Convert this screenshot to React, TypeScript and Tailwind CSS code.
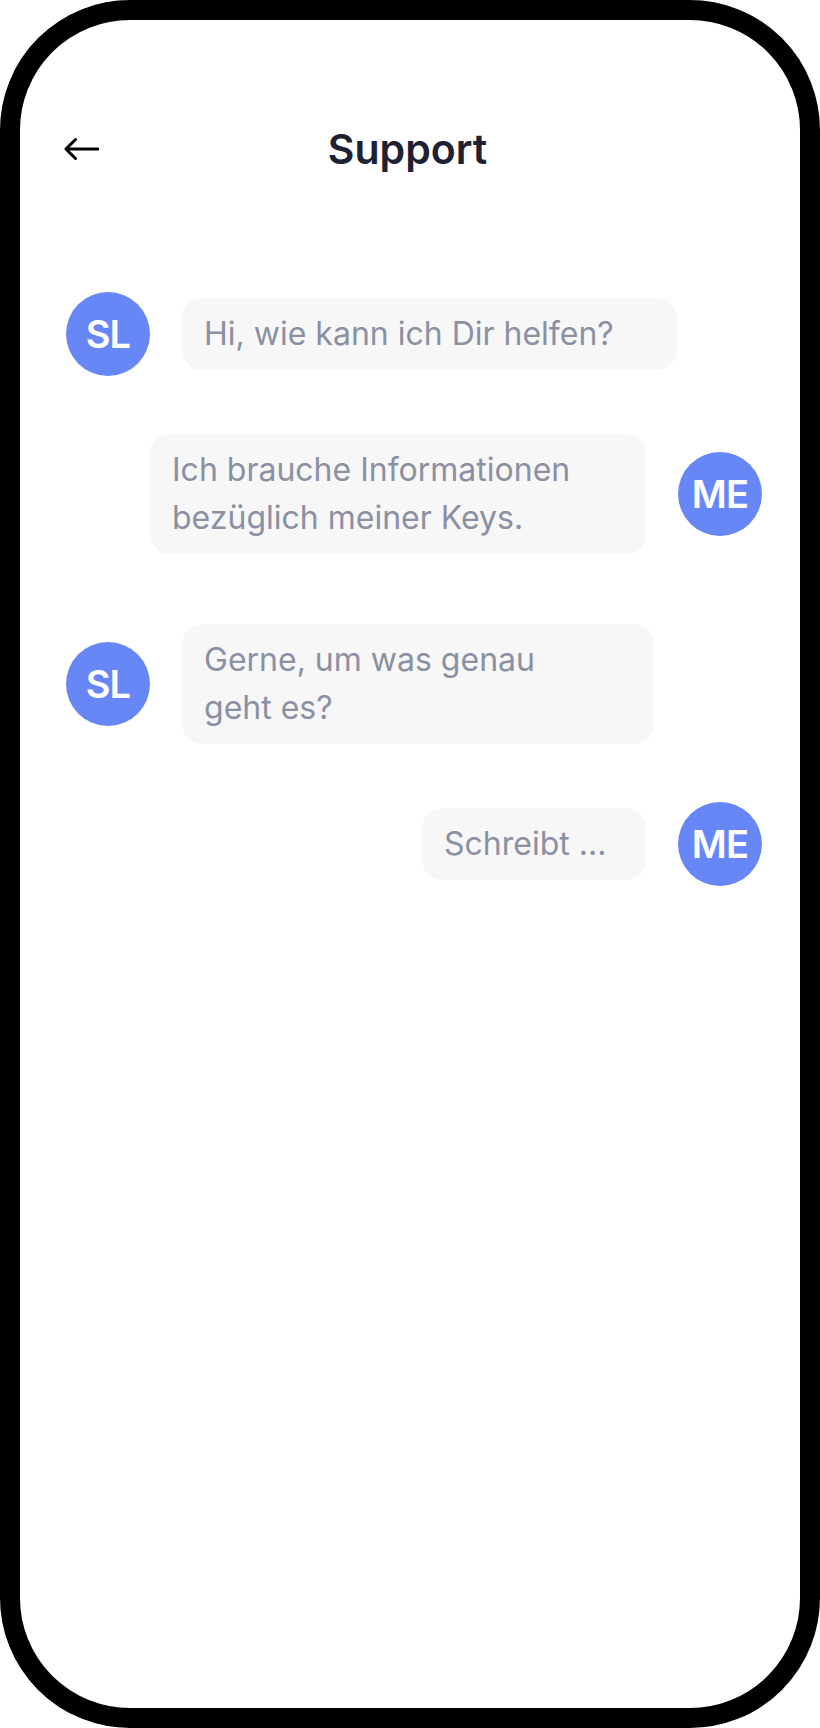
import React from 'react';

type Msg = {
  from: 'support' | 'me';
  lines: string[];
  width: string;
  gap: string;
};

const messages: Msg[] = [
  { from: 'support', lines: ['Hi, wie kann ich Dir helfen?'], width: 'w-[495px]', gap: 'mt-0' },
  { from: 'me', lines: ['Ich brauche Informationen', 'bezüglich meiner Keys.'], width: 'w-[496px]', gap: 'mt-[58px]' },
  { from: 'support', lines: ['Gerne, um was genau', 'geht es?'], width: 'w-[472px]', gap: 'mt-[70px]' },
  { from: 'me', lines: ['Schreibt ...'], width: 'w-[224px]', gap: 'mt-[58px]' },
];

function Avatar({ label }: { label: string }) {
  return (
    <div className="w-[84px] h-[84px] shrink-0 rounded-full bg-[#6887f6] flex items-center justify-center">
      <span className="text-white text-[38px] font-semibold leading-none tracking-[-0.02em]">{label}</span>
    </div>
  );
}

function Bubble({ lines, width }: { lines: string[]; width: string }) {
  return (
    <div className={`${width} shrink-0 rounded-[20px] bg-[#f7f7f8] pl-[22px] pr-4 py-3`}>
      <p className="text-[32px] leading-[48px] text-[#8b90a2]">
        {lines.map((line, i) => (
          <React.Fragment key={i}>
            {i > 0 && <br />}
            {line}
          </React.Fragment>
        ))}
      </p>
    </div>
  );
}

export default function App() {
  return (
    <div className="w-[820px] h-[1728px] bg-white" style={{ fontFamily: 'Inter, "Noto Sans", sans-serif' }}>
      <div className="w-full h-full rounded-[130px] border-[20px] border-black bg-white overflow-hidden">
        <header className="mt-[99px] h-[60px] px-[44px] flex items-center">
          <button className="w-[35px] h-[22px] flex items-center" aria-label="Zurück">
            <svg width="35" height="22" viewBox="0 0 35 22" fill="none">
              <path d="M34 11H3" stroke="#000" strokeWidth="3" strokeLinecap="round" />
              <path d="M11.5 1.5L2 11l9.5 9.5" stroke="#000" strokeWidth="3" strokeLinecap="round" strokeLinejoin="round" />
            </svg>
          </button>
          <h1 className="flex-1 text-center text-[41px] leading-[60px] font-semibold text-[#1e2132]">
            Support
          </h1>
          <div className="w-[40px]" />
        </header>

        <main className="mt-[113px]">
          {messages.map((m, i) =>
            m.from === 'support' ? (
              <div key={i} className={`${m.gap} flex items-center gap-8 pl-[46px]`}>
                <Avatar label="SL" />
                <Bubble lines={m.lines} width={m.width} />
              </div>
            ) : (
              <div key={i} className={`${m.gap} flex items-center justify-end gap-8 pr-[38px]`}>
                <Bubble lines={m.lines} width={m.width} />
                <Avatar label="ME" />
              </div>
            )
          )}
        </main>
      </div>
    </div>
  );
}
